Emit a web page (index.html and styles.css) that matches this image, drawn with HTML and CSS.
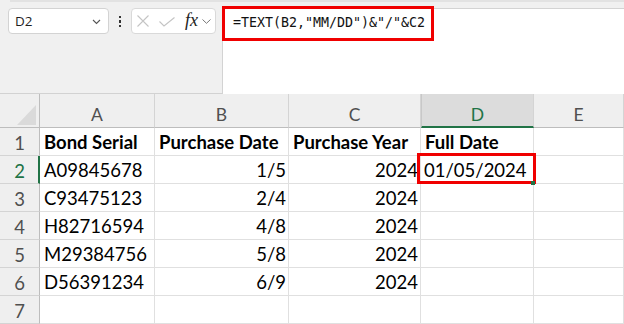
FILE: index.html
```html
<!DOCTYPE html>
<html>
<head>
<meta charset="utf-8">
<link rel="stylesheet" href="styles.css">
</head>
<body>
<div class="top">
  <div class="shadow"></div>
  <div class="bar">
    <div class="namebox">
      <span class="name">D2</span>
      <svg class="chev" width="9" height="6" viewBox="0 0 9 6"><path d="M1 1 L4.5 4.5 L8 1" fill="none" stroke="#555" stroke-width="1.1"/></svg>
    </div>
    <div class="dots"><i></i><i></i><i></i></div>
    <div class="fxbox">
      <svg class="ico-x" width="12" height="12" viewBox="0 0 12 12"><path d="M0.5 0.5 L11.5 11.5 M11.5 0.5 L0.5 11.5" stroke="#c4c4c4" stroke-width="1.1"/></svg>
      <svg class="ico-check" width="16" height="10" viewBox="0 0 16 10"><path d="M0.5 4.5 L5 9 L15.5 0.5" fill="none" stroke="#c4c4c4" stroke-width="1.1"/></svg>
      <span class="fx">fx</span>
      <svg class="chev2" width="9" height="5" viewBox="0 0 9 5"><path d="M0.5 0.5 L4.5 4.3 L8.5 0.5" fill="none" stroke="#777" stroke-width="1"/></svg>
    </div>
    <div class="formula">
      <span class="ftext">=TEXT(B2,"MM/DD")&amp;"/"&amp;C2</span>
      <div class="redbox"></div>
    </div>
  </div>
</div>
<div class="sheet">
  <div class="ch corner"><div class="tri"></div></div>
  <div class="ch">A</div>
  <div class="ch">B</div>
  <div class="ch">C</div>
  <div class="ch sel">D</div>
  <div class="ch">E</div>

  <div class="rh">1</div>
  <div class="c b">Bond Serial</div>
  <div class="c b">Purchase Date</div>
  <div class="c b">Purchase Year</div>
  <div class="c b">Full Date</div>
  <div class="c"></div>

  <div class="rh rsel">2</div>
  <div class="c">A09845678</div>
  <div class="c r">1/5</div>
  <div class="c r">2024</div>
  <div class="c active">01/05/2024<div class="cellbox"></div><div class="handle"></div></div>
  <div class="c"></div>

  <div class="rh">3</div>
  <div class="c">C93475123</div>
  <div class="c r">2/4</div>
  <div class="c r">2024</div>
  <div class="c"></div>
  <div class="c"></div>

  <div class="rh">4</div>
  <div class="c">H82716594</div>
  <div class="c r">4/8</div>
  <div class="c r">2024</div>
  <div class="c"></div>
  <div class="c"></div>

  <div class="rh">5</div>
  <div class="c">M29384756</div>
  <div class="c r">5/8</div>
  <div class="c r">2024</div>
  <div class="c"></div>
  <div class="c"></div>

  <div class="rh">6</div>
  <div class="c">D56391234</div>
  <div class="c r">6/9</div>
  <div class="c r">2024</div>
  <div class="c"></div>
  <div class="c"></div>

  <div class="rh">7</div>
  <div class="c"></div>
  <div class="c"></div>
  <div class="c"></div>
  <div class="c"></div>
  <div class="c"></div>
</div>
</body>
</html>
```

FILE: styles.css
```css
* { box-sizing: border-box; }
html, body { margin: 0; padding: 0; }
body {
  width: 624px;
  height: 324px;
  overflow: hidden;
  background: #f0f0f0;
  font-family: Lato, "Liberation Sans", sans-serif;
}
.top {
  height: 94px;
  border-bottom: 1px solid #d2d2d2;
  background: #f0f0f0;
  position: relative;
}
.shadow {
  position: absolute;
  left: 10px;
  right: 0;
  top: 0;
  height: 2px;
  background: #e2e2e2;
}
.bar {
  display: flex;
  align-items: flex-start;
  padding: 8px 0 0 8px;
}
.namebox {
  width: 101px;
  height: 26px;
  background: #fff;
  border: 1px solid #d3d3d3;
  border-radius: 4px;
  display: flex;
  align-items: center;
  padding-left: 6px;
  padding-right: 7px;
}
.name {
  font-family: "Open Sans", sans-serif;
  font-size: 13.5px;
  color: #1f1f1f;
  flex: 1;
  margin-top: -1px;
}
.chev { margin-top: 1px; }
.dots {
  width: 22px;
  height: 26px;
  display: flex;
  flex-direction: column;
  align-items: center;
  justify-content: center;
  gap: 2px;
  padding-top: 1px;
}
.dots i {
  display: block;
  width: 2px;
  height: 2.5px;
  background: #333;
}
.fxbox {
  width: 85px;
  height: 26px;
  background: #fff;
  border: 1px solid #d9d9d9;
  border-radius: 4px;
  display: flex;
  align-items: center;
  padding-left: 5px;
}
.ico-x { margin-right: 10px; }
.ico-check { margin-right: 10px; margin-top: 1px; }
.fx {
  font-family: "Liberation Serif", "DejaVu Serif", serif;
  font-style: italic;
  font-size: 18px;
  color: #222;
  margin-top: -1px;
  margin-right: 4px;
}
.chev2 { margin-top: 1px; }
.formula {
  position: relative;
  margin-left: 6px;
  flex: 1;
  height: 86px;
  background: #fff;
  border: 1px solid #d3d3d3;
  border-bottom: none;
  border-radius: 4px 0 0 0;
  margin-right: -4px;
}
.ftext {
  position: relative;
  display: block;
  padding: 6px 0 0 10px;
  font-family: "DejaVu Sans Mono", "Liberation Mono", monospace;
  font-size: 13.3px;
  line-height: 16px;
  color: #111;
}
.redbox {
  position: absolute;
  left: -1px;
  top: -3px;
  width: 212px;
  height: 35px;
  border: 3px solid #f00000;
}
.sheet {
  display: grid;
  grid-template-columns: 40px 115px 134px 132px 113px 1fr;
  grid-template-rows: 34px repeat(7, 28px);
  background: #fff;
}
.ch {
  background: #efefef;
  border-right: 1px solid #d4d4d4;
  border-bottom: 1px solid #bdbdbd;
  text-align: center;
  color: #505050;
  font-size: 17.5px;
  line-height: 20px;
  padding-top: 11px;
}
.ch.corner {
  position: relative;
  border-right-color: #bdbdbd;
}
.tri {
  position: absolute;
  left: 17px;
  top: 11px;
  width: 0;
  height: 0;
  border-left: 19px solid transparent;
  border-bottom: 20px solid #dadada;
}
.ch.sel {
  background: #dcdcdc;
  color: #217346;
  border-bottom: 2px solid #217346;
  border-right-color: #d4d4d4;
  border-left: 1px solid #c8c8c8;
}
.rh {
  background: #efefef;
  border-right: 1px solid #bdbdbd;
  border-bottom: 1px solid #d4d4d4;
  text-align: center;
  color: #505050;
  font-size: 18.5px;
  line-height: 26px;
  padding-top: 2px;
}
.rh.rsel {
  color: #217346;
  border-right: 2px solid #217346;
  padding-left: 1px;
}
.c {
  border-right: 1px solid #e0e0e0;
  border-bottom: 1px solid #e0e0e0;
  font-size: 18.5px;
  line-height: 26px;
  padding: 1px 4px 0 4px;
  color: #000;
  white-space: nowrap;
  overflow: visible;
}
.c.b { font-weight: 700; }
.c.r { text-align: right; padding-right: 2px; }
.c.active { position: relative; padding-left: 3px; }
.cellbox {
  position: absolute;
  left: -4px;
  top: -3px;
  width: 119px;
  height: 31px;
  border: 3px solid #f00000;
}
.handle {
  position: absolute;
  right: -2px;
  bottom: -2px;
  width: 4px;
  height: 4px;
  background: #217346;
}
```
